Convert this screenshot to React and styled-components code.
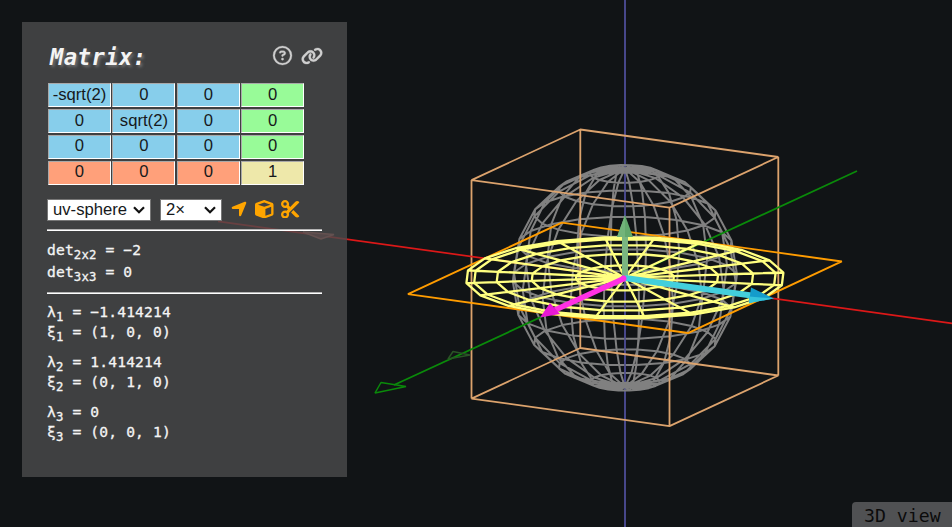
import React from "react";
import styled, { createGlobalStyle } from "styled-components";
import {
  FaRegCircleQuestion,
  FaLink,
  FaLocationArrow,
  FaCube,
  FaScissors,
} from "react-icons/fa6";

const GlobalStyle = createGlobalStyle`
  html, body, #root { height: 100%; }
  body { margin: 0; overflow: hidden; background: #111416; }
`;

const mono = '"DejaVu Sans Mono", monospace';
const sans = '"Liberation Sans", Arial, sans-serif';

const Page = styled.main`
  position: relative;
  box-sizing: border-box;
  width: 952px;
  height: 527px;
  padding: 22px;
  overflow: hidden;
  background: #111416;
`;

const Scene = styled.svg`
  position: absolute;
  inset: 0;
`;

const Panel = styled.section`
  position: relative;
  box-sizing: border-box;
  width: 325px;
  height: 455px;
  padding: 19px 25px 0 25px;
  background: rgba(75, 75, 76, 0.8);
  color: #f4f4f4;
  font: 14.62px/20px ${mono};
  letter-spacing: 0.15px;
  -webkit-text-stroke: 0.3px #f4f4f4;
`;

const Header = styled.header`
  display: flex;
  align-items: center;
  justify-content: space-between;
  width: 276px;
  height: 29px;
`;

const Title = styled.h1`
  margin: 0;
  padding: 3px 0 0 3px;
  font: italic bold 22.2px/29px ${mono};
  letter-spacing: 0.45px;
  text-shadow: 2px 2px 3px #707070;
  -webkit-text-stroke: 0;
`;

const HeaderIcons = styled.div`
  display: flex;
  align-items: center;
  gap: 9px;
  height: 25px;
  color: #cfcfcf;

  svg {
    overflow: visible;
    stroke: #cfcfcf;
    stroke-width: 8;
  }
`;

const MatrixGrid = styled.div`
  display: grid;
  grid-template-columns: 63px 63px 63px 63px;
  grid-template-rows: repeat(4, 1fr);
  column-gap: 1.4px;
  row-gap: 1.6px;
  height: 102px;
  margin: 13px 0 0 1px;
`;

const tones = {
  linear: "skyblue",
  translate: "palegreen",
  perspective: "lightsalmon",
  scale: "palegoldenrod",
};

const Cell = styled.input`
  box-sizing: border-box;
  min-width: 0;
  width: 63px;
  height: 100%;
  padding: 0 0 1px 0;
  border: 1px solid;
  border-color: #a9a9a9 #fff #fff #a9a9a9;
  border-radius: 0;
  background: ${(p) => tones[p.$tone]};
  color: #16191b;
  font: 16.67px/20px ${sans};
  text-align: center;
  -webkit-text-stroke: 0;
`;

const Toolbar = styled.div`
  display: flex;
  align-items: center;
  height: 22px;
  margin-top: 14px;
`;

const SelectBox = styled.label`
  display: grid;
  grid-template-columns: 1fr 12px;
  align-items: center;
  box-sizing: border-box;
  width: ${(p) => p.$width}px;
  height: 22px;
  margin-right: 9px;
  padding: 0 5px;
  border: 1px solid #767676;
  background: #fff;
  color: #16191b;
`;

const NativeSelect = styled.select`
  appearance: none;
  min-width: 0;
  height: 20px;
  padding: 0;
  border: 0;
  background: transparent;
  color: inherit;
  font: 16.67px/20px ${sans};
  -webkit-text-stroke: 0;
`;

const ToolIcons = styled.div`
  display: flex;
  align-items: center;
  gap: 7.5px;
  height: 20px;
  margin: -2px 0 0 -1.5px;
  color: orange;
`;

const Rule = styled.hr`
  box-sizing: border-box;
  width: 275px;
  height: 2px;
  margin: ${(p) => p.$top}px 0 0;
  border: 0;
  border-top: 1px solid #b4b4b4;
  border-bottom: 1px solid #fff;
`;

const Lines = styled.div`
  margin-top: ${(p) => p.$top}px;
`;

const Line = styled.div`
  height: ${(p) => p.$height}px;
  white-space: pre;
  line-height: ${(p) => p.$height}px;
`;

const Sub = styled.sub`
  position: relative;
  top: 4px;
  font-size: 12.3px;
  line-height: 0;
  vertical-align: baseline;
`;

const ViewTag = styled.div`
  position: absolute;
  right: 0;
  bottom: 0;
  box-sizing: border-box;
  width: 100px;
  height: 25px;
  padding-left: 12px;
  border-radius: 4px 0 0 0;
  background: #505153;
  color: #0b0b0b;
  font: 18.2px/27px ${mono};
`;

/* Orthographic projection of the world axes onto the screen. */
const project = ([x, y, z]) => [
  624.9 + 99 * x - 54.4 * y,
  277.8 + 13.75 * x + 25.3 * y - 109.25 * z,
];

const toPath = (points, closed) =>
  "M" +
  points
    .map((p) => project(p).map((n) => n.toFixed(2)).join(" "))
    .join("L") +
  (closed ? "Z" : "");

const SLICES = 20;
const STACKS = 10;

const spherePath = (sx, sy, sz) => {
  const at = (i, j) => {
    const theta = (Math.PI * i) / STACKS;
    const phi = (2 * Math.PI * j) / SLICES;
    return [
      sx * Math.sin(theta) * Math.cos(phi),
      sy * Math.sin(theta) * Math.sin(phi),
      sz * Math.cos(theta),
    ];
  };
  const range = (n) => Array.from({ length: n }, (_, k) => k);
  const rings = range(STACKS - 1).map((i) =>
    toPath(range(SLICES).map((j) => at(i + 1, j)), true)
  );
  const meridians = range(SLICES).map((j) =>
    toPath(range(STACKS + 1).map((i) => at(i, j)), false)
  );
  return [...rings, ...meridians].join("");
};

const square = (s, z) =>
  toPath([[-s, -s, z], [s, -s, z], [s, s, z], [-s, s, z]], true);

const cubePath =
  square(1, -1) +
  square(1, 1) +
  [[-1, -1], [1, -1], [1, 1], [-1, 1]]
    .map(([x, y]) => toPath([[x, y, -1], [x, y, 1]], false))
    .join("");

const spherePathUnit = spherePath(1, 1, 1);
const spherePathFlat = spherePath(-Math.SQRT2, Math.SQRT2, 0);
const planePath = square(Math.SQRT2, 0);

function Viewport() {
  return (
    <Scene width="952" height="527" viewBox="0 0 952 527" fill="none" strokeLinejoin="bevel">
      <path d="M625 0V527" stroke="#47478a" strokeWidth="2" />
      <path d={spherePathUnit} stroke="#808080" strokeWidth="2" />
      <path d="M625 178V378" stroke="#47478a" strokeWidth="2" opacity=".7" />
      <path d={cubePath} stroke="#dca36d" strokeWidth="1.8" />
      <path d="M218 221.3L952 323.3" stroke="#dc1818" strokeWidth="1.7" />
      <path d="M303 232L334 234.5L321 239Z" stroke="#c8685f" strokeWidth="1.5" fill="#7a3f3f" />
      <path d="M857 171L394 385" stroke="#0a8a0a" strokeWidth="1.8" />
      <path d="M375 393L381 382.5L406 386.5Z" stroke="#0a8a0a" strokeWidth="1.5" />
      <path d="M448 359L453 351.5L470 355Z" stroke="#2a5426" strokeWidth="1.5" />
      <path d={planePath} stroke="#ff9c00" strokeWidth="1.9" />
      <path d={spherePathFlat} stroke="#ffff80" strokeWidth="2.3" />
      <path d="M625 277V236" stroke="#7bb581" strokeWidth="6" />
      <path d="M625 215L633 237H617Z" fill="#62a86c" />
      <path d="M625 215L625 237H617Z" fill="#72b47a" />
      <path d="M625 278L755 296" stroke="#43cfdc" strokeWidth="6" />
      <path d="M751 287.5L774 298.5L749 303Z" fill="#149ccb" />
      <path d="M749 296.5L774 298.5L749 303Z" fill="#35c4dc" />
      <path d="M625 278L555 310" stroke="#ff30e4" strokeWidth="5.5" />
      <path d="M540 317.5L550 303L560 314Z" fill="#e818d4" />
      <circle cx="623.5" cy="278.5" r="3" fill="#ff30e4" />
    </Scene>
  );
}

function Select({ width, value }) {
  return (
    <SelectBox $width={width}>
      <NativeSelect defaultValue={value}>
        <option>{value}</option>
      </NativeSelect>
      <svg width="12" height="8" viewBox="0 0 12 8" fill="none">
        <path d="M1 1.3L6 6.3L11 1.3" stroke="#111" strokeWidth="2.2" />
      </svg>
    </SelectBox>
  );
}

const matrix = [
  ["-sqrt(2)", "0", "0", "0"],
  ["0", "sqrt(2)", "0", "0"],
  ["0", "0", "0", "0"],
  ["0", "0", "0", "1"],
];

const toneOf = (r, c) => {
  if (r === 3) return c === 3 ? "scale" : "perspective";
  return c === 3 ? "translate" : "linear";
};

const eigen = [
  ["1", "−1.414214", "(1, 0, 0)"],
  ["2", "1.414214", "(0, 1, 0)"],
  ["3", "0", "(0, 0, 1)"],
];

export default function App() {
  return (
    <Page>
      <GlobalStyle />
      <Viewport />
      <Panel>
        <Header>
          <Title>Matrix:</Title>
          <HeaderIcons>
            <FaRegCircleQuestion size={19} />
            <FaLink size={22} />
          </HeaderIcons>
        </Header>
        <MatrixGrid>
          {matrix.map((row, r) =>
            row.map((value, c) => (
              <Cell key={`${r}${c}`} $tone={toneOf(r, c)} defaultValue={value} />
            ))
          )}
        </MatrixGrid>
        <Toolbar>
          <Select width={104} value="uv-sphere" />
          <Select width={62} value="2×" />
          <ToolIcons>
            <FaLocationArrow size={18} />
            <FaCube size={18.5} />
            <FaScissors size={18.5} />
          </ToolIcons>
        </Toolbar>
        <Rule $top={8} />
        <Lines $top={8}>
          <Line $height={21.5}>det<Sub>2x2</Sub> = −2</Line>
          <Line $height={21.5}>det<Sub>3x3</Sub> = 0</Line>
        </Lines>
        <Rule $top={10} />
        {eigen.map(([n, value, vector], i) => (
          <Lines key={n} $top={i ? 10 : 8}>
            <Line $height={20}>λ<Sub>{n}</Sub> = {value}</Line>
            <Line $height={20}>ξ<Sub>{n}</Sub> = {vector}</Line>
          </Lines>
        ))}
      </Panel>
      <ViewTag>3D view</ViewTag>
    </Page>
  );
}
